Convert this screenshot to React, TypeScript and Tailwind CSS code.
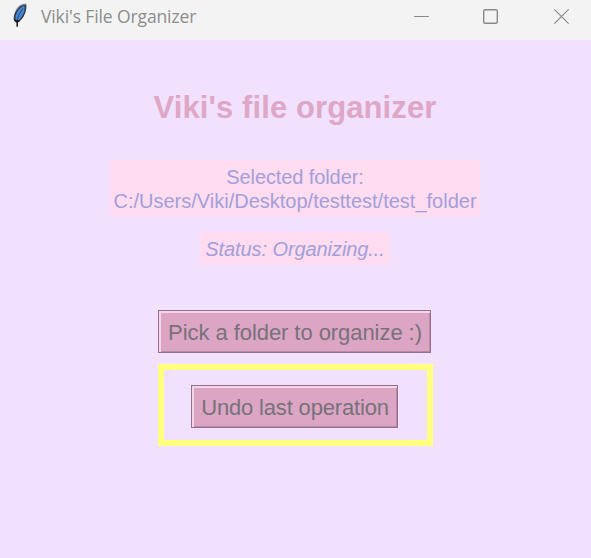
import React from "react";

function Feather() {
  return (
    <svg width="16" height="26" viewBox="0 0 16 26" className="mt-[2px] shrink-0">
      <path d="M14.200 2.200C10.200 1.900 6.200 4.500 4 8.500 2 12 1.200 16 2 18.800l2.600 1.700 3-1.200c3-2.500 5-6 6-9.500.8-2.800 1-5.300.6-7.600Z" fill="#30353c" />
      <path d="M12.600 3.600C9.600 4.600 6.800 7 5 10.200c-1.500 2.800-2 5.600-1.500 7.800l1.700.9 1.900-1c2.400-2.200 4.200-5.100 5.100-8.500.6-2 .7-4 .4-5.800Z" fill="#4584d2" />
      <path d="M4 8.500C6.200 4.500 10.200 1.900 14.200 2.200" stroke="#8f9296" strokeWidth="1.200" fill="none" />
      <path d="M10.800 6.500 6.500 13.500 5 19" stroke="#23436f" strokeWidth=".8" fill="none" />
      <path d="M2.500 17.800 4.900 20l2.600-1.200M5.200 18v6.700" stroke="#15191e" strokeWidth="1.500" fill="none" />
    </svg>
  );
}

function TitleBar() {
  return (
    <header className="flex h-10 bg-[#f3f3f3] pl-3">
      <Feather />
      <h1 className="ml-[13px] mt-1 w-[156px] whitespace-nowrap font-['Open_Sans','Noto_Sans',sans-serif] text-[17.5px] leading-6 tracking-[-0.12px] text-[#8d8d8d]">
        Viki's File Organizer
      </h1>
      <svg width="164" height="32" viewBox="0 0 164 32" fill="none" stroke="#898989" className="ml-auto mr-[22px]">
        <path d="M9 16.500h15" />
        <rect x="78.700" y="9.700" width="13.600" height="13.600" rx="1.500" strokeWidth="1.400" />
        <path d="m149.300 9.300 14.400 14.400m0-14.400-14.400 14.400" strokeWidth="1.200" />
      </svg>
    </header>
  );
}

function ActionButton({ children, className }: { children: React.ReactNode; className: string }) {
  return (
    <button
      className={`flex h-[43px] justify-center whitespace-nowrap border border-[#94708a] bg-[#dca5c4] pt-[2px] text-[22px] leading-[40px] text-[#77727b] shadow-[inset_2px_2px_0_#f4d5e8,inset_-1px_-1px_0_#b98aa5] ${className}`}
    >
      {children}
    </button>
  );
}

export default function App() {
  return (
    <div className="flex h-[558px] w-[591px] flex-col overflow-hidden bg-[#f1e1ff] font-['Liberation_Sans',Arial,sans-serif]">
      <TitleBar />
      <main className="flex w-[590px] flex-col items-center">
        <h2 className="mt-[50px] whitespace-nowrap text-[31px] font-bold leading-9 tracking-[0.1px] text-[#dfa7c6]">Viki's file organizer</h2>
        <p className="mt-[34px] h-[57px] w-[370px] whitespace-nowrap bg-[#ffdcef] pt-[5px] text-center text-[20px] leading-6 text-[#a19fdb]">
          <span className="tracking-[-0.1px]">Selected folder:</span>
          <br />
          C:/Users/Viki/Desktop/testtest/test_folder
        </p>
        <p className="mt-[15px] h-[33px] w-[190px] whitespace-nowrap bg-[#ffdcef] text-center text-[20px] italic leading-[34px] tracking-[-0.08px] text-[#a19fdb]">
          Status: Organizing...
        </p>
        <ActionButton className="mr-px mt-[45px] w-[273px] pl-px tracking-[-0.06px]">Pick a folder to organize :)</ActionButton>
        <section className="ml-px mt-[11px] flex h-[82px] w-[275px] justify-center border-[6px] border-[#ffff80] pt-[15px]">
          <ActionButton className="mr-[2px] w-[207px] pl-px tracking-[-0.17px]">Undo last operation</ActionButton>
        </section>
      </main>
    </div>
  );
}
